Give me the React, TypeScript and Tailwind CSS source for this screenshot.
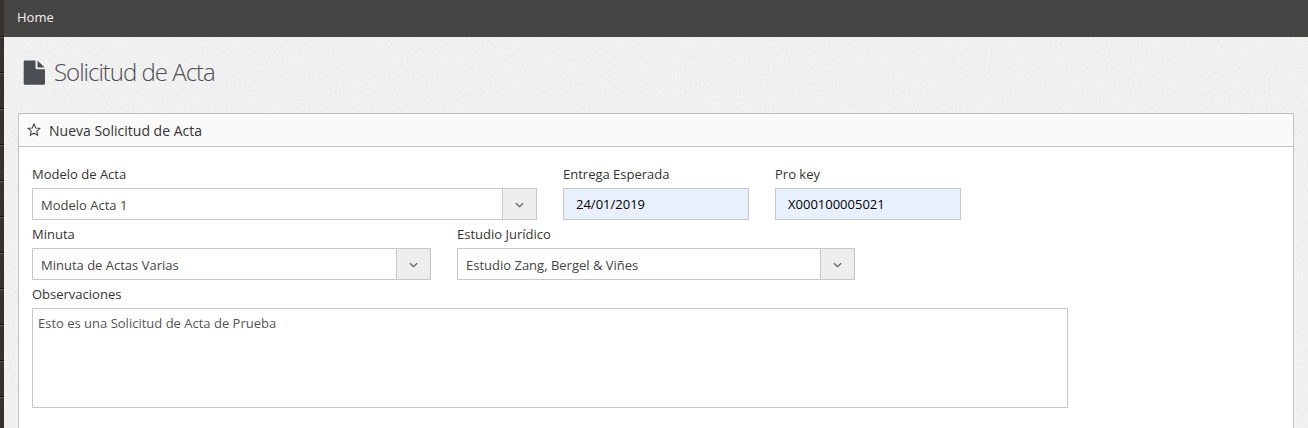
import React from "react";

function Chevron() {
  return (
    <svg width="9" height="6" viewBox="0 0 9 6" fill="none" stroke="#5c5c5c" strokeWidth="1.2">
      <path d="M.9 1.2 4.5 4.6 8.1 1.2" />
    </svg>
  );
}

function Field({ label, className, children }: { label: string; className: string; children: React.ReactNode }) {
  return (
    <div className={className}>
      <label className="flex h-7 items-center text-[#333]">{label}</label>
      {children}
    </div>
  );
}

function Select({ value }: { value: string }) {
  return (
    <div className="flex h-8 border border-[#c8c8c8] bg-white">
      <div className="flex flex-1 items-center pt-0.5 pl-2 text-[#444]">{value}</div>
      <div className="flex w-[34px] items-center justify-center border-l border-[#c8c8c8] bg-[#eee] pt-0.5">
        <Chevron />
      </div>
    </div>
  );
}

function Input({ value }: { value: string }) {
  return (
    <input
      className="block h-8 w-full border border-[#c8c8c8] bg-[#e8f0fe] px-3 text-black outline-none"
      defaultValue={value}
    />
  );
}

function Texture() {
  return (
    <svg className="pointer-events-none absolute inset-0 h-full w-full opacity-[0.022]" aria-hidden="true">
      <filter id="grain">
        <feTurbulence type="fractalNoise" baseFrequency="0.45" numOctaves="2" />
        <feColorMatrix values="0 0 0 0 0  0 0 0 0 0  0 0 0 0 0  1.5 0 0 0 -0.4" />
      </filter>
      <rect width="100%" height="100%" filter="url(#grain)" />
    </svg>
  );
}

export default function App() {
  return (
    <div className="flex h-[428px] w-full overflow-hidden bg-[#f2f2f2] font-['Open_Sans',sans-serif] text-[13px] leading-5">
      <aside className="w-1 shrink-0 bg-[#37322d]">
        {Array.from({ length: 12 }, (_, i) => (
          <div
            key={i}
            className={
              i === 0
                ? "h-[37px] border-b border-[#161412]"
                : "h-9 border-t border-b border-t-[#5a5650] border-b-[#161412]"
            }
          />
        ))}
      </aside>
      <div className="flex min-w-0 flex-1 flex-col">
        <header className="flex h-[37px] shrink-0 items-center bg-[#474544] pb-[3px] pl-[13px] text-[#f0f0f0]">Home</header>
        <main className="relative flex flex-1 flex-col px-3.5">
          <Texture />
          <div className="relative flex h-[76px] shrink-0 items-center pb-1.5 pl-[5px]">
            <svg width="22" height="25" viewBox="0 0 22 25" fill="#4b4e53">
              <path d="M2 .5H12.5V7.7Q12.5 9.2 14 9.2H22V23.5Q22 24.8 20.7 24.8H2Q.7 24.8.7 23.5V1.8Q.7.5 2 .5Z" />
              <path d="M14.5.8Q15.2 1.2 15.7 1.7L20.4 6.2Q21.1 6.9 21.4 7.6H14.5Z" />
            </svg>
            <h1 className="pl-[9px] text-[24px] leading-8 font-light tracking-[-1px] text-[#4b4e53]">Solicitud de Acta</h1>
          </div>
          <section className="relative flex-1 border border-b-0 border-[#c2c2c2] bg-white">
            <div className="flex h-[33px] items-center border-b border-[#c2c2c2] bg-[#fafafa] pl-2 text-sm text-[#333]">
              <svg width="14" height="14" viewBox="0 0 14 14" fill="none" stroke="#444" strokeWidth="1.05">
                <path d="M7 1 8.7 4.9 12.9 5.3 9.8 8.1 10.7 12.3 7 10.2 3.3 12.3 4.2 8.1 1.1 5.3 5.3 4.9Z" />
              </svg>
              <span className="pt-0.5 pl-2">Nueva Solicitud de Acta</span>
            </div>
            <form className="pt-[13px] pl-[13px]">
              <div className="flex gap-[26px]">
                <Field label="Modelo de Acta" className="w-[505px]">
                  <Select value="Modelo Acta 1" />
                </Field>
                <Field label="Entrega Esperada" className="w-[186px]">
                  <Input value="24/01/2019" />
                </Field>
                <Field label="Pro key" className="w-[186px]">
                  <Input value="X000100005021" />
                </Field>
              </div>
              <div className="flex gap-[26px]">
                <Field label="Minuta" className="w-[399px]">
                  <Select value="Minuta de Actas Varias" />
                </Field>
                <Field label="Estudio Jurídico" className="w-[398px]">
                  <Select value="Estudio Zang, Bergel & Viñes" />
                </Field>
              </div>
              <Field label="Observaciones" className="w-[1036px]">
                <textarea
                  className="block h-[100px] w-full resize-none border border-[#c8c8c8] bg-white px-[5px] py-1 text-[#555] outline-none"
                  defaultValue="Esto es una Solicitud de Acta de Prueba"
                />
              </Field>
            </form>
          </section>
        </main>
      </div>
    </div>
  );
}
